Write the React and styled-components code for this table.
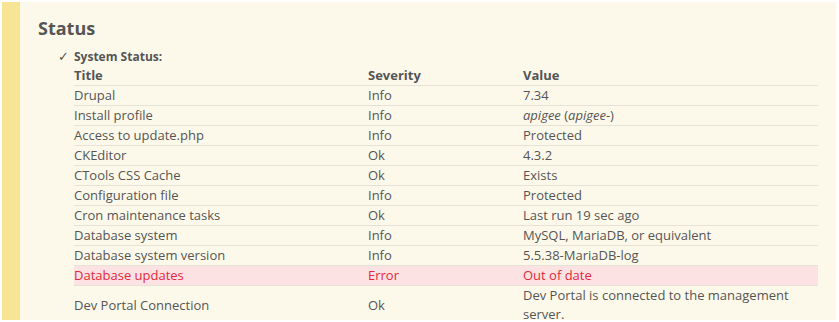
import React from "react";
import styled, { createGlobalStyle } from "styled-components";

const Global = createGlobalStyle`
  html, body { margin: 0; padding: 0; background: #ffffff; }
  body { font-family: "Open Sans", "DejaVu Sans", sans-serif; color: #555555; }
`;

const Page = styled.div`
  padding: 2px 3px 2px 2px;
`;

const Panel = styled.section`
  background: #fdf9ea;
  border-left: 18px solid #f7e494;
  padding: 12px 18px 0 18px;
  height: 318px;
  box-sizing: border-box;
  overflow: hidden;
`;

const Heading = styled.h2`
  margin: 0;
  font-size: 18px;
  font-weight: 700;
  line-height: 28px;
  color: #555555;
`;

const Group = styled.div`
  margin-top: 5px;
  padding-left: 20px;
`;

const Label = styled.div`
  display: flex;
  font-size: 12px;
  font-weight: 700;
  line-height: 19px;
`;

const Check = styled.span`
  width: 16px;
  font-weight: 400;
  font-size: 13px;
`;

const Table = styled.div`
  margin-left: 16px;
  width: 744px;
  display: grid;
  grid-template-columns: 294px 155px 295px;
  font-size: 13px;
`;

const Row = styled.div`
  display: contents;
  & > div {
    background: ${(p) => (p.$error ? "#fde2e3" : "transparent")};
    color: ${(p) => (p.$error ? "#e3283c" : "#555555")};
    border-bottom: ${(p) => (p.$last ? "none" : "1px solid #e6e2d5")};
    font-weight: ${(p) => (p.$head ? 700 : 400)};
  }
`;

const Cell = styled.div`
  line-height: 19px;
  min-height: 19px;
  display: flex;
  align-items: center;
`;

const rows = [
  ["Drupal", "Info", "7.34"],
  ["Install profile", "Info", <><em>apigee</em> (<em>apigee</em>-)</>],
  ["Access to update.php", "Info", "Protected"],
  ["CKEditor", "Ok", "4.3.2"],
  ["CTools CSS Cache", "Ok", "Exists"],
  ["Configuration file", "Info", "Protected"],
  ["Cron maintenance tasks", "Ok", "Last run 19 sec ago"],
  ["Database system", "Info", "MySQL, MariaDB, or equivalent"],
  ["Database system version", "Info", "5.5.38-MariaDB-log"],
  ["Database updates", "Error", "Out of date"],
  ["Dev Portal Connection", "Ok", "Dev Portal is connected to the management server."],
];

export default function App() {
  return (
    <Page>
      <Global />
      <Panel>
        <Heading>Status</Heading>
        <Group>
          <Label>
            <Check>✓</Check>
            <span>System Status:</span>
          </Label>
          <Table>
            <Row $head>
              <Cell><span>Title</span></Cell>
              <Cell><span>Severity</span></Cell>
              <Cell><span>Value</span></Cell>
            </Row>
            {rows.map((r, i) => (
              <Row key={i} $error={r[1] === "Error"} $last={i === rows.length - 1}>
                <Cell><span>{r[0]}</span></Cell>
                <Cell><span>{r[1]}</span></Cell>
                <Cell><span>{r[2]}</span></Cell>
              </Row>
            ))}
          </Table>
        </Group>
      </Panel>
    </Page>
  );
}
